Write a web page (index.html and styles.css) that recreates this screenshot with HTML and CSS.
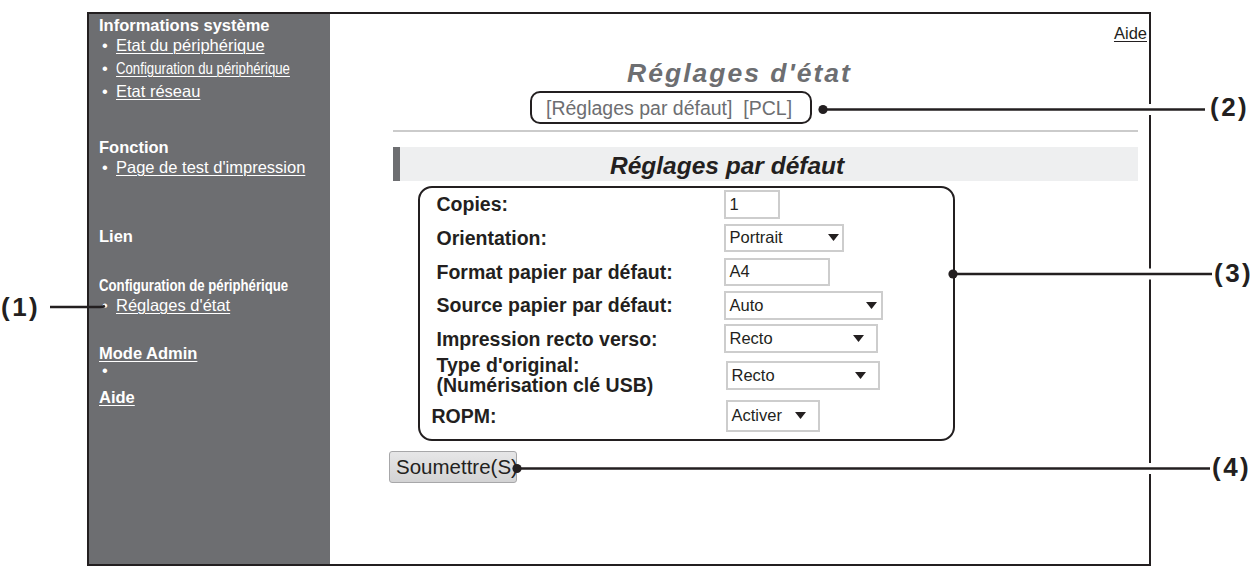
FILE: index.html
```html
<!DOCTYPE html>
<html lang="fr">
<head>
<meta charset="utf-8">
<title>Réglages d'état</title>
<link rel="stylesheet" href="styles.css">
</head>
<body>
<div class="page">
  <div class="frame">
    <nav class="side">
      <div class="hd">Informations système</div>
      <ul class="items">
        <li><span class="dot">•</span><a href="#">Etat du périphérique</a></li>
        <li><span class="dot">•</span><span class="narrow"><a href="#">Configuration du périphérique</a></span></li>
        <li><span class="dot">•</span><a href="#">Etat réseau</a></li>
      </ul>
      <div class="hd hd-fonction">Fonction</div>
      <ul class="items">
        <li><span class="dot">•</span><a href="#">Page de test d'impression</a></li>
      </ul>
      <div class="hd hd-lien">Lien</div>
      <div class="hd hd-config"><span class="narrow">Configuration de périphérique</span></div>
      <ul class="items">
        <li><span class="dot">•</span><a href="#">Réglages d'état</a></li>
      </ul>
      <div class="hd hd-admin"><a href="#">Mode Admin</a></div>
      <div class="lone"><span class="dot">•</span></div>
      <div class="hd hd-aide"><a href="#">Aide</a></div>
    </nav>
    <main class="main">
      <div class="help"><a href="#">Aide</a></div>
      <h1 class="title">Réglages d'état</h1>
      <div class="sub"><span class="subbox">[Réglages par défaut]&nbsp; [PCL]</span></div>
      <hr class="rule">
      <h2 class="bar">Réglages par défaut</h2>
      <div class="formbox">
        <span class="lbl">Copies:</span>
        <span class="ctl inp w-copies">1</span>
        <span class="lbl">Orientation:</span>
        <span class="ctl sel w-portrait">Portrait<svg class="arr" viewBox="0 0 11 7"><path d="M0 0H11L5.5 7Z"/></svg></span>
        <span class="lbl">Format papier par défaut:</span>
        <span class="ctl inp w-a4">A4</span>
        <span class="lbl">Source papier par défaut:</span>
        <span class="ctl sel w-auto">Auto<svg class="arr" viewBox="0 0 11 7"><path d="M0 0H11L5.5 7Z"/></svg></span>
        <span class="lbl">Impression recto verso:</span>
        <span class="ctl sel w-recto">Recto<svg class="arr" viewBox="0 0 11 7"><path d="M0 0H11L5.5 7Z"/></svg></span>
        <span class="lbl lbl-two">Type d'original:<br>(Numérisation clé USB)</span>
        <span class="ctl sel w-recto shift">Recto<svg class="arr" viewBox="0 0 11 7"><path d="M0 0H11L5.5 7Z"/></svg></span>
        <span class="lbl lbl-ropm">ROPM:</span>
        <span class="ctl sel w-activer shift">Activer<svg class="arr" viewBox="0 0 11 7"><path d="M0 0H11L5.5 7Z"/></svg></span>
      </div>
      <button class="submit" type="button">Soumettre(S)</button>
    </main>
  </div>

  <svg class="callouts" viewBox="0 0 1256 568" width="1256" height="568">
    <g fill="#fff">
      <rect x="1145" y="104" width="10" height="11"/>
      <rect x="1145" y="268.5" width="10" height="11"/>
      <rect x="1145" y="463" width="10" height="11"/>
    </g>
    <g stroke="#231f20" stroke-width="2.6" fill="none">
      <path d="M50 307H100Q103 307 105 306"/>
      <path d="M823 109.5H1205"/>
      <path d="M953 274H1212"/>
      <path d="M517 468.5H1210"/>
    </g>
    <g fill="#231f20">
      <circle cx="823" cy="109.5" r="4.6"/>
      <circle cx="953" cy="274" r="4.6"/>
      <circle cx="517" cy="468.5" r="4.6"/>
    </g>
  </svg>
  <span class="num n1">(1)</span>
  <span class="num n2">(2)</span>
  <span class="num n3">(3)</span>
  <span class="num n4">(4)</span>
</div>
</body>
</html>
```

FILE: styles.css
```css
html, body {
  margin: 0;
  padding: 0;
  background: #fff;
}

body {
  font-family: "Liberation Sans", Arial, sans-serif;
  color: #231f20;
}

.page {
  position: relative;
  width: 1256px;
  height: 568px;
  padding: 12px 0 0 87px;
  box-sizing: border-box;
}

.frame {
  width: 1064px;
  height: 554px;
  box-sizing: border-box;
  border: 2px solid #231f20;
  display: grid;
  grid-template-columns: 241px 1fr;
}

/* ---------- side navigation ---------- */
.side {
  background: #6d6e71;
  color: #fff;
  padding: 2px 0 0 10px;
  font-size: 16.5px;
}

.side a {
  color: #fff;
  text-decoration: underline;
  text-underline-offset: 2px;
  text-decoration-thickness: 1px;
}

.hd {
  font-weight: bold;
  line-height: 18px;
}

.items {
  list-style: none;
  margin: 0;
  padding: 0;
}

.items li {
  line-height: 23px;
  white-space: nowrap;
}

.dot {
  display: inline-block;
  width: 17px;
  padding-left: 3px;
  box-sizing: border-box;
}

.narrow {
  display: inline-block;
  transform: scaleX(0.8);
  transform-origin: left center;
  white-space: nowrap;
}

.hd-fonction { margin-top: 35px; }
.hd-lien { margin-top: 48px; }
.hd-config { margin-top: 31px; }
.hd-admin { margin-top: 26.5px; }
.hd-aide { margin-top: 11.5px; }

.lone {
  line-height: 14px;
  margin-top: 1px;
}

/* ---------- main area ---------- */
.main {
  background: #fff;
  padding: 0 11px 0 63px;
  min-width: 0;
}

.help {
  margin: 9px -9px 0 0;
  text-align: right;
  font-size: 16.5px;
  line-height: 20px;
}

.help a {
  color: #231f20;
  text-underline-offset: 2px;
  text-decoration-thickness: 1px;
}

.title {
  margin: 14.5px -11px 0 -63px;
  text-align: center;
  font-size: 26.5px;
  line-height: 30px;
  font-weight: bold;
  font-style: italic;
  letter-spacing: 2px;
  color: #6d6e71;
}

.sub {
  margin-top: 3px;
  padding-left: 137px;
  line-height: 0;
}

.subbox {
  display: inline-block;
  border: 2.5px solid #231f20;
  border-radius: 10px;
  padding: 3px 18px 2px 14px;
  font-size: 19.5px;
  line-height: 24px;
  color: #6d6e71;
  white-space: nowrap;
}

.rule {
  margin: 6px 0 0 0;
  border: 0;
  height: 2px;
  background: #cbcbcb;
}

.bar {
  margin: 15px 0 0 0;
  height: 34px;
  box-sizing: border-box;
  background: #eeeff0;
  border-left: 7px solid #6d6e71;
  padding: 3px 0 0 210px;
  font-size: 24.5px;
  line-height: 31px;
  font-weight: bold;
  font-style: italic;
  color: #231f20;
}

.formbox {
  margin: 5px 0 0 25px;
  width: 537px;
  height: 255px;
  box-sizing: border-box;
  border: 2.5px solid #231f20;
  border-radius: 14px;
  padding: 0 0 0 16.5px;
  display: grid;
  grid-template-columns: 287px 1fr;
  grid-template-rows: 33px 34px 34px 33px 34px 40px 40px;
  align-items: center;
}

.lbl {
  font-size: 19.5px;
  font-weight: bold;
  line-height: 22px;
  white-space: nowrap;
}

.lbl-two {
  line-height: 19.5px;
}

.lbl-ropm {
  margin-left: -5px;
}

.ctl {
  box-sizing: border-box;
  border: 2px solid #cdcdcd;
  font-size: 16.5px;
  color: #231f20;
  display: flex;
  align-items: center;
  padding: 0 3px 0 4px;
  background: #fff;
}

.sel {
  justify-content: space-between;
}

.arr {
  width: 11px;
  height: 7px;
  fill: #231f20;
}

.w-copies { width: 56px; height: 29px; }
.w-portrait { width: 120px; height: 28px; }
.w-a4 { width: 106px; height: 28px; }
.w-auto { width: 159px; height: 29px; padding-right: 4px; }
.w-recto { width: 154px; height: 29px; padding-right: 12px; }
.w-activer { width: 94px; height: 32px; padding-right: 12px; }

.shift {
  margin-left: 2px;
}

.submit {
  display: block;
  margin: 10px 0 0 -4px;
  width: 128px;
  height: 32px;
  box-sizing: border-box;
  padding: 0 0 0 6px;
  text-align: left;
  white-space: nowrap;
  overflow: visible;
  font-family: "Liberation Sans", Arial, sans-serif;
  font-size: 20.5px;
  line-height: 28px;
  color: #231f20;
  background: linear-gradient(#e6e6e7, #d3d3d4);
  border: 1.5px solid #a7a7a9;
  border-radius: 3px;
}

/* ---------- callout annotations ---------- */
.callouts {
  position: absolute;
  left: 0;
  top: 0;
  pointer-events: none;
}

.num {
  position: absolute;
  font-size: 26px;
  line-height: 30px;
  font-weight: bold;
  letter-spacing: 2.5px;
  color: #231f20;
  white-space: nowrap;
}

.n1 { left: 1px; top: 292px; }
.n2 { left: 1210px; top: 91.5px; }
.n3 { left: 1214px; top: 257.5px; }
.n4 { left: 1212px; top: 451.5px; }
```
